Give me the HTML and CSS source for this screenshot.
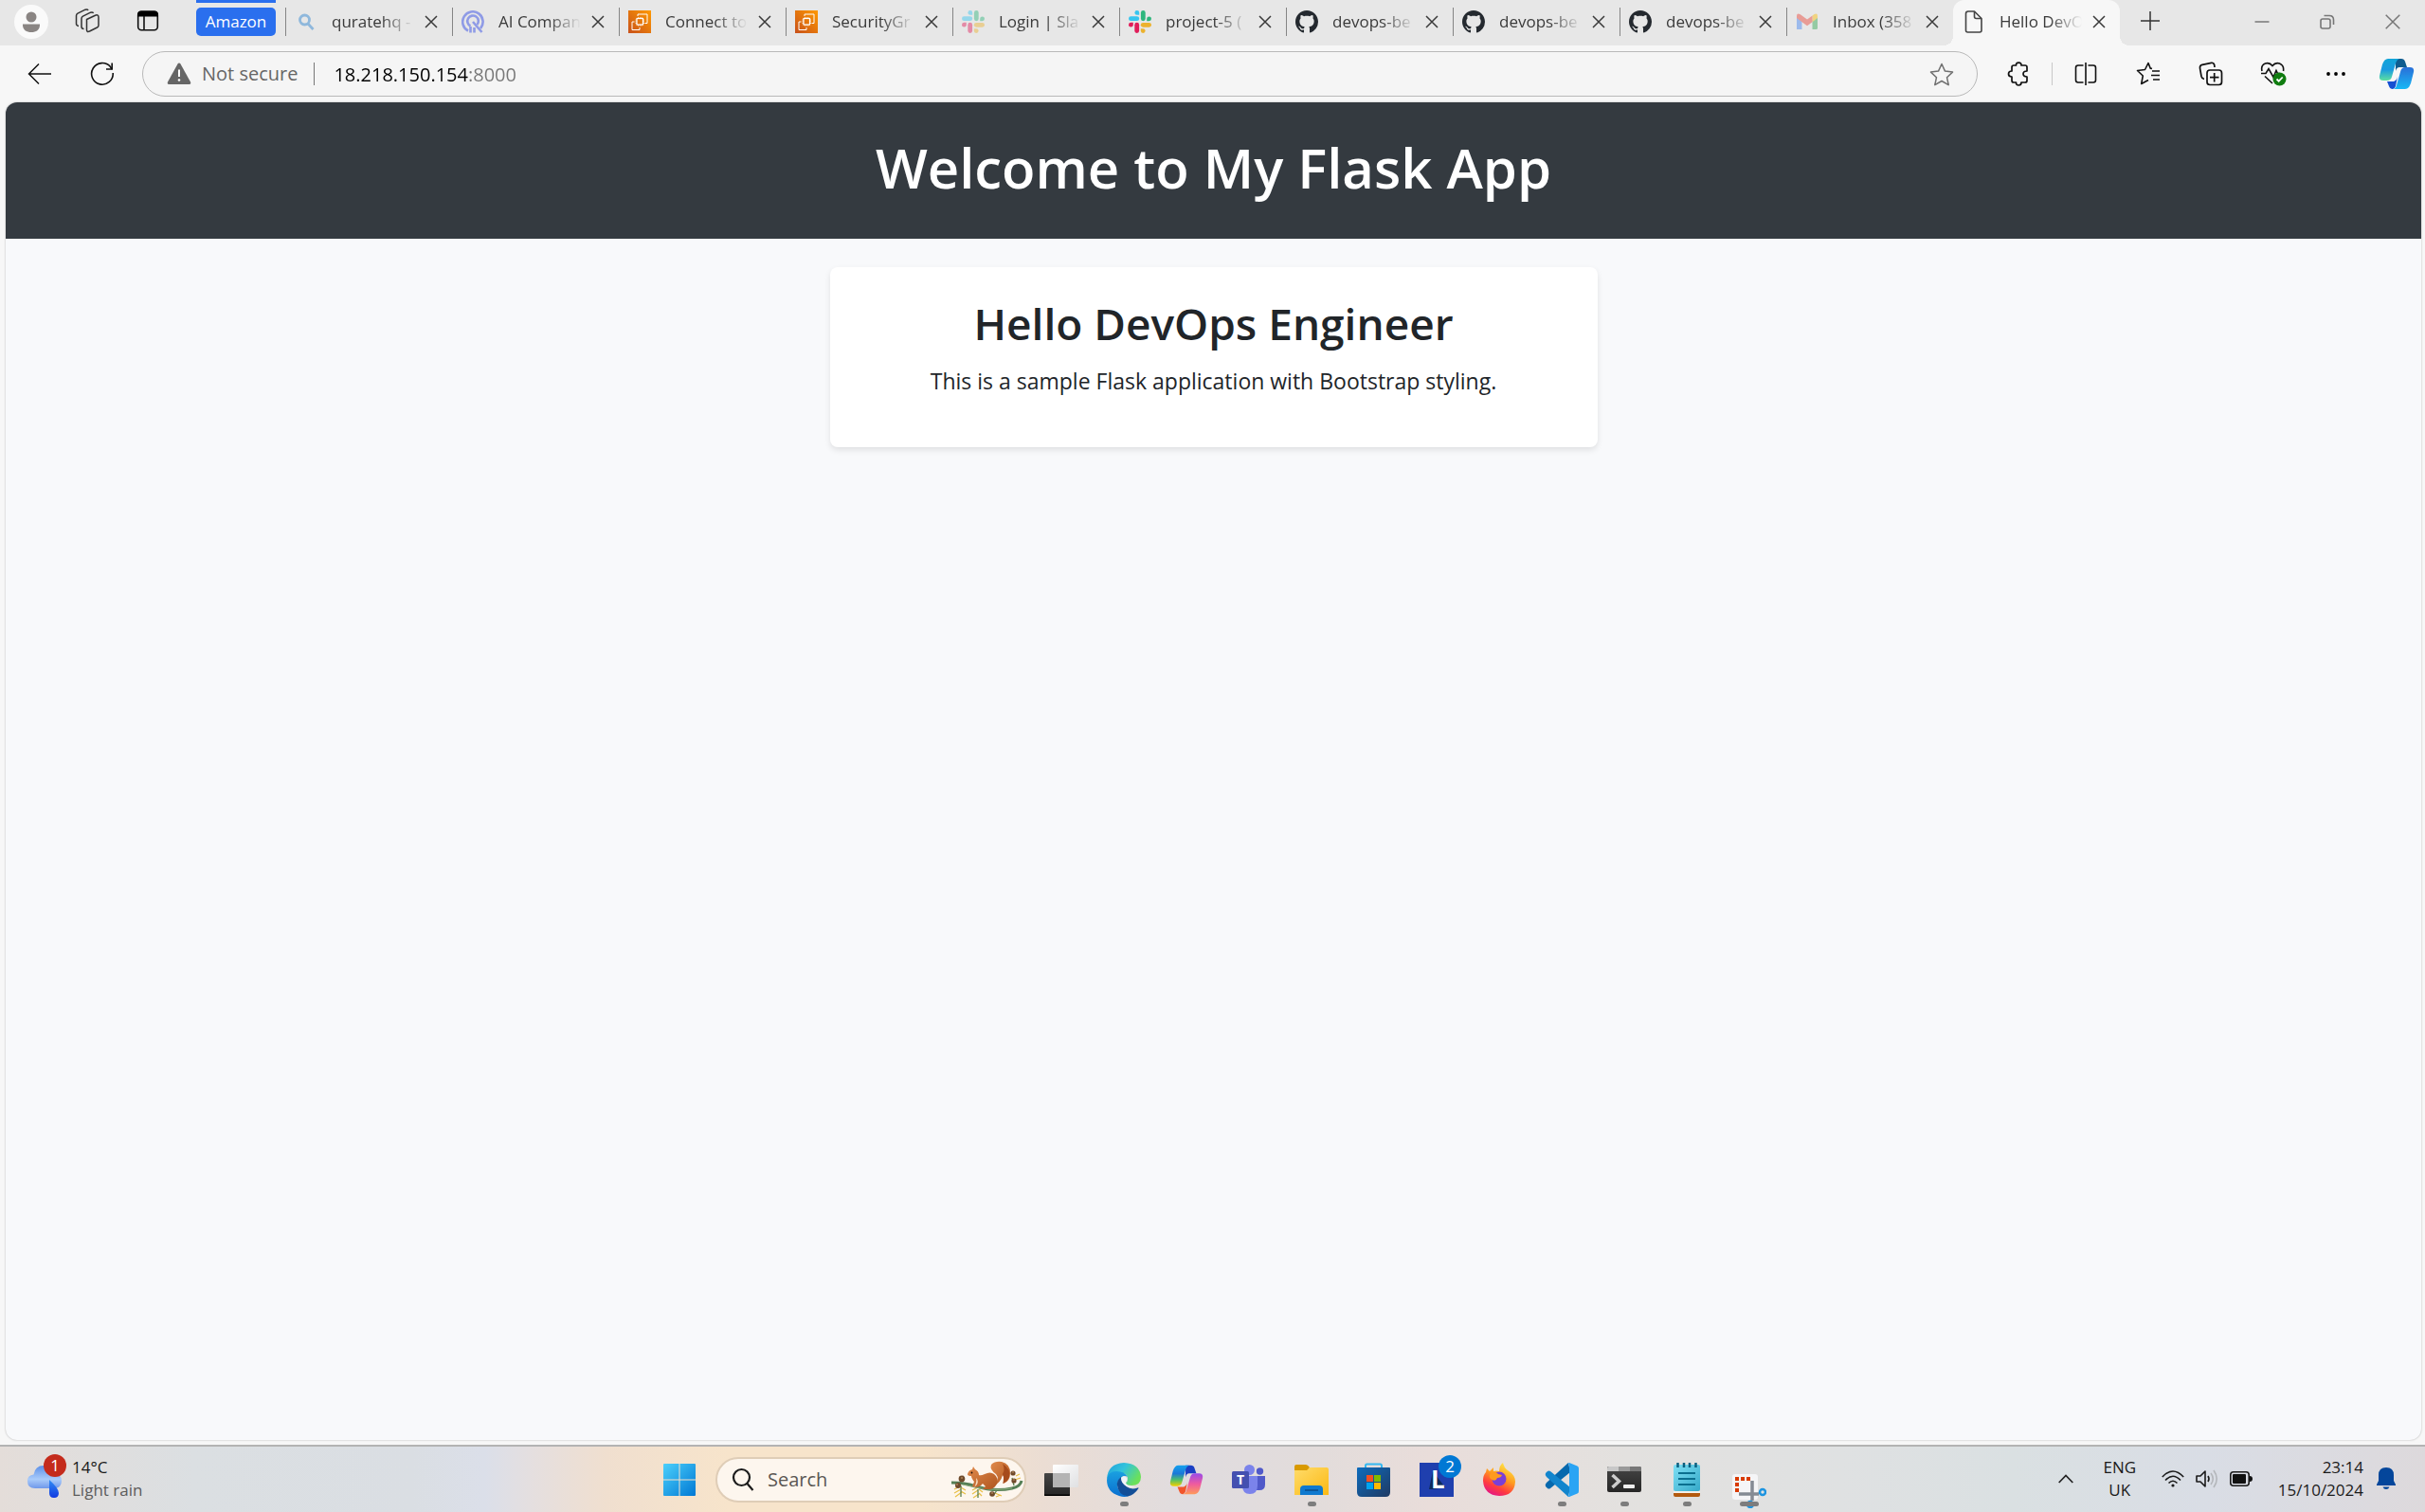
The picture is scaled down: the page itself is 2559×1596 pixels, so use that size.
FILE: index.html
```html
<!DOCTYPE html>
<html lang="en">
<head>
<meta charset="utf-8">
<title>Hello DevOps Engineer</title>
<link rel="stylesheet" href="styles.css">
</head>
<body>
<svg class="defs" aria-hidden="true">
  <defs>
    <linearGradient id="g-aws" x1="0" y1="1" x2="1" y2="0"><stop offset="0" stop-color="#c8511b"/><stop offset="1" stop-color="#ff9900"/></linearGradient>
    <linearGradient id="g-win" x1="0" y1="0" x2="1" y2="1"><stop offset="0" stop-color="#4cd0fb"/><stop offset="1" stop-color="#0078d4"/></linearGradient>
    <linearGradient id="g-cloud" x1="0" y1="0" x2="0" y2="1"><stop offset="0" stop-color="#5b8fe8"/><stop offset=".6" stop-color="#a9cbfa"/><stop offset="1" stop-color="#6f98ea"/></linearGradient>
    <linearGradient id="g-drop" x1="0" y1="0" x2="0" y2="1"><stop offset="0" stop-color="#2f8df5"/><stop offset="1" stop-color="#123ae0"/></linearGradient>
    <linearGradient id="g-dark" x1="0" y1="0" x2="0" y2="1"><stop offset="0" stop-color="#454545"/><stop offset="1" stop-color="#262626"/></linearGradient>
    <linearGradient id="g-edge1" x1="0" y1="0" x2="1" y2=".5"><stop offset="0" stop-color="#1fa0dc"/><stop offset=".5" stop-color="#33c3dc"/><stop offset="1" stop-color="#6be05a"/></linearGradient>
    <linearGradient id="g-edge2" x1="0" y1="0" x2="0" y2="1"><stop offset="0" stop-color="#1aa0e0"/><stop offset="1" stop-color="#0a6fd0"/></linearGradient>
    <linearGradient id="g-cp1" x1="0" y1="0" x2="0" y2="1"><stop offset="0" stop-color="#12a5d8"/><stop offset=".5" stop-color="#1a9be0"/><stop offset="1" stop-color="#5ee0a0"/></linearGradient>
    <linearGradient id="g-cp2" x1="0" y1="0" x2="0" y2="1"><stop offset="0" stop-color="#2a6fd8"/><stop offset="1" stop-color="#16b8f5"/></linearGradient>
    <linearGradient id="g-cp3" x1="0" y1="0" x2="0" y2="1"><stop offset="0" stop-color="#14a0ee"/><stop offset=".4" stop-color="#1a78d8"/><stop offset=".7" stop-color="#4fc06a"/><stop offset="1" stop-color="#f2d000"/></linearGradient>
    <linearGradient id="g-cp4" x1="0" y1="0" x2="0" y2="1"><stop offset="0" stop-color="#9a4be8"/><stop offset=".5" stop-color="#ee5aa0"/><stop offset="1" stop-color="#ff9a5a"/></linearGradient>
    <linearGradient id="g-folder" x1="0" y1="0" x2="1" y2="1"><stop offset="0" stop-color="#ffdc6b"/><stop offset="1" stop-color="#fcb913"/></linearGradient>
    <linearGradient id="g-store" x1="0" y1="0" x2="1" y2="1"><stop offset="0" stop-color="#0d6cbd"/><stop offset="1" stop-color="#203a63"/></linearGradient>
    <linearGradient id="g-fox" x1=".8" y1="0" x2=".3" y2="1"><stop offset="0" stop-color="#fff04a"/><stop offset=".45" stop-color="#ff9a1f"/><stop offset=".75" stop-color="#ff3b3f"/><stop offset="1" stop-color="#e31587"/></linearGradient>
    <linearGradient id="g-note" x1="0" y1="0" x2="1" y2="1"><stop offset="0" stop-color="#7fe0f5"/><stop offset="1" stop-color="#35a9c9"/></linearGradient>
    <linearGradient id="g-fur" x1="0" y1="0" x2="1" y2="1"><stop offset="0" stop-color="#e08a4c"/><stop offset="1" stop-color="#b0561f"/></linearGradient>
    <linearGradient id="g-white" x1="0" y1="0" x2="1" y2="1"><stop offset="0" stop-color="#ffffff"/><stop offset="1" stop-color="#dfe0e2"/></linearGradient>
  </defs>
  <symbol id="i-close" viewBox="0 0 14 14"><path d="M1 1l12 12M13 1L1 13" fill="none" stroke="currentColor" stroke-width="1.5"/></symbol>
  <symbol id="i-github" viewBox="0 0 16 16"><path fill="#24292f" d="M8 0C3.58 0 0 3.58 0 8c0 3.54 2.29 6.53 5.47 7.59.4.07.55-.17.55-.38 0-.19-.01-.82-.01-1.49-2.01.37-2.53-.49-2.69-.94-.09-.23-.48-.94-.82-1.13-.28-.15-.68-.52-.01-.53.63-.01 1.08.58 1.23.82.72 1.21 1.87.87 2.33.66.07-.52.28-.87.51-1.07-1.78-.2-3.64-.89-3.64-3.95 0-.87.31-1.59.82-2.15-.08-.2-.36-1.02.08-2.12 0 0 .67-.21 2.2.82.64-.18 1.32-.27 2-.27s1.36.09 2 .27c1.53-1.04 2.2-.82 2.2-.82.44 1.1.16 1.92.08 2.12.51.56.82 1.27.82 2.15 0 3.07-1.87 3.75-3.65 3.95.29.25.54.73.54 1.48 0 1.07-.01 1.93-.01 2.2 0 .21.15.46.55.38A8.01 8.01 0 0 0 16 8c0-4.42-3.58-8-8-8z"/></symbol>
  <symbol id="i-slack-part" viewBox="0 0 24 24"><rect y="6.3" width="11.2" height="4.8" rx="2.4"/><path d="M8.8 0a2.4 2.4 0 0 0 0 4.8h2.4V2.4A2.4 2.4 0 0 0 8.8 0z"/></symbol>
  <symbol id="i-slack" viewBox="0 0 24 24">
    <g fill="#36c5f0"><use href="#i-slack-part" width="24" height="24"/></g>
    <g fill="#2eb67d" transform="rotate(90 12 12)"><use href="#i-slack-part" width="24" height="24"/></g>
    <g fill="#ecb22e" transform="rotate(180 12 12)"><use href="#i-slack-part" width="24" height="24"/></g>
    <g fill="#e01e5a" transform="rotate(270 12 12)"><use href="#i-slack-part" width="24" height="24"/></g>
  </symbol>
  <symbol id="i-aws" viewBox="0 0 24 24"><path fill="url(#g-aws)" d="M0 0h24v24H0z"/><g fill="none" stroke="#fff"><path d="M10 6V4h10v9.500h-2.500M12 18v2.500H4V12h2.500"/><rect x="9" y="8.500" width="6.500" height="6.500" stroke-width="1.200"/><path d="M10.500 7v1.500M12.300 7v1.500M14 7v1.500M10.500 15v1.500M12.300 15v1.500M14 15v1.500M7.500 10H9M7.500 11.800H9M7.500 13.500H9M15.500 10H17M15.500 11.800H17M15.500 13.500H17" stroke-width=".7"/></g></symbol>
</svg>

<header class="tabstrip">
  <button class="profile" aria-label="Profile"><svg width="36" height="36" viewBox="0 0 36 36"><circle cx="18" cy="18" r="18" fill="#fafafa"/><circle cx="18" cy="13" r="5.500" fill="#8a8583"/><path d="M9 20.500h18v1c0 5-4 7.500-9 7.500s-9-2.500-9-7.500z" fill="#8a8583"/></svg></button>
  <button class="tool" aria-label="Workspaces"><svg width="26" height="26" viewBox="0 0 26 26" fill="none" stroke="#333" stroke-width="1.500" stroke-linejoin="round"><path d="M12.500 11.500l9-4.300q3.500-1.200 3.500 2v8.500q0 1.500-1.500 2.300l-8 4q-3 1.300-3-1.500z"/><path d="M9.500 21.500q-2.500 0-2.500-2.500v-8.500q0-1.500 1.500-2.300l8-4q2-.8 3.200.5"/><path d="M4 18.500q-2.500-.5-2.500-2.500V7.500q0-1.500 1.500-2.300l8-4q2-.8 3.200.5"/></svg></button>
  <button class="tool" aria-label="Tab actions"><svg width="24" height="24" viewBox="0 0 24 24"><rect x="1.700" y="2.200" width="20.600" height="19.600" rx="3.500" fill="none" stroke="#111" stroke-width="1.600"/><path d="M1 7.500V5.500a4 4 0 0 1 4-4h14a4 4 0 0 1 4 4v2z" fill="#000"/><path d="M8 7v15" stroke="#111" stroke-width="1.600"/></svg></button>
  <button class="group">Amazon</button>
  <nav class="tabs" aria-label="Tabs">
    <div class="tab"><svg class="favicon" viewBox="0 0 24 24" fill="none" stroke="#8fb8dc" stroke-width="2.800"><circle cx="10.500" cy="10" r="5"/><path d="M14 14l5.500 6"/></svg><span class="title">quratehq -</span><button class="close" aria-label="Close tab"><svg><use href="#i-close"/></svg></button></div>
    <div class="tab"><svg class="favicon" viewBox="0 0 24 24" fill="none" stroke="#8f9be6" stroke-width="2.600"><path d="M7 21.500A10.700 10.700 0 1 1 20 19"/><path d="M9.500 16.500A5.800 5.800 0 1 1 16.500 15"/><path d="M12 12l9.500 11M9.500 17v6.500M13.500 18v5.500"/></svg><span class="title">AI Compan</span><button class="close" aria-label="Close tab"><svg><use href="#i-close"/></svg></button></div>
    <div class="tab"><svg class="favicon"><use href="#i-aws"/></svg><span class="title">Connect to</span><button class="close" aria-label="Close tab"><svg><use href="#i-close"/></svg></button></div>
    <div class="tab"><svg class="favicon"><use href="#i-aws"/></svg><span class="title">SecurityGr</span><button class="close" aria-label="Close tab"><svg><use href="#i-close"/></svg></button></div>
    <div class="tab"><svg class="favicon asleep"><use href="#i-slack"/></svg><span class="title">Login | Sla</span><button class="close" aria-label="Close tab"><svg><use href="#i-close"/></svg></button></div>
    <div class="tab"><svg class="favicon"><use href="#i-slack"/></svg><span class="title">project-5 (</span><button class="close" aria-label="Close tab"><svg><use href="#i-close"/></svg></button></div>
    <div class="tab"><svg class="favicon"><use href="#i-github"/></svg><span class="title">devops-be</span><button class="close" aria-label="Close tab"><svg><use href="#i-close"/></svg></button></div>
    <div class="tab"><svg class="favicon"><use href="#i-github"/></svg><span class="title">devops-be</span><button class="close" aria-label="Close tab"><svg><use href="#i-close"/></svg></button></div>
    <div class="tab"><svg class="favicon"><use href="#i-github"/></svg><span class="title">devops-be</span><button class="close" aria-label="Close tab"><svg><use href="#i-close"/></svg></button></div>
    <div class="tab"><svg class="favicon asleep" viewBox="0 0 24 24"><path d="M1 20V6l5.500 4.200V20H2.500Q1 20 1 20z" fill="#4285f4"/><path d="M17.500 20v-9.800L23 6v12.500q0 1.500-1.500 1.500z" fill="#34a853"/><path d="M17.500 5.500l2-1.400Q23 2.500 23 6v2l-5.500 4.200z" fill="#fbbc04"/><path d="M6.500 12.200L1 8V6q0-3.500 3.500-1.900L12 9.500l5.500-4v6.700L12 16.300z" fill="#ea4335"/></svg><span class="title">Inbox (358</span><button class="close" aria-label="Close tab"><svg><use href="#i-close"/></svg></button></div>
    <div class="tab active"><svg class="favicon" viewBox="0 0 24 24" fill="none" stroke="#444" stroke-width="1.600" stroke-linejoin="round"><path d="M3.500 3.500q0-2.500 2.500-2.500h6.500L20 8.500V21q0 2-2 2H5.500q-2 0-2-2z"/><path d="M12.500 1v5.500q0 2 2 2H20"/></svg><span class="title">Hello DevO</span><button class="close" aria-label="Close tab"><svg><use href="#i-close"/></svg></button></div>
  </nav>
  <button class="tool" aria-label="New tab"><svg width="22" height="22" viewBox="0 0 22 22" stroke="#333" stroke-width="1.500"><path d="M1 11h20M11 1v20"/></svg></button>
  <div class="window-controls">
    <button aria-label="Minimise"><svg width="16" height="16" viewBox="0 0 16 16" stroke="#777" stroke-width="1.500"><path d="M.5 8h15"/></svg></button>
    <button aria-label="Restore"><svg width="16" height="16" viewBox="0 0 16 16" fill="none" stroke="#777" stroke-width="1.600"><rect x="1" y="5" width="10" height="10" rx="2"/><path d="M4.500 1.500H10q4.500 0 4.500 4.500v5" /></svg></button>
    <button aria-label="Close window"><svg width="16" height="16" viewBox="0 0 16 16" stroke="#777" stroke-width="1.500"><path d="M.7.7l14.600 14.600M15.300.7L.7 15.300"/></svg></button>
  </div>
</header>

<div class="toolbar">
  <button class="tool" aria-label="Back"><svg width="26" height="24" viewBox="0 0 26 24" fill="none" stroke="#111" stroke-width="1.500"><path d="M12 1.500L1.500 12 12 22.500M1.500 12H25"/></svg></button>
  <button class="tool" aria-label="Refresh"><svg width="26" height="26" viewBox="0 0 26 26" fill="none" stroke="#111" stroke-width="1.600"><path d="M24.200 12A11.300 11.300 0 1 1 21.500 5.500L23 8"/><path d="M23.200 1.500V8H17"/></svg></button>
  <div class="address">
    <svg width="26" height="24" viewBox="0 0 26 24"><path d="M11.500 1.500q1.500-2 3 0l10.500 19q1 2.500-1.500 2.500h-21q-2.500 0-1.500-2.500z" fill="#666"/><path d="M13 7.500v7.500" stroke="#fff" stroke-width="2"/><circle cx="13" cy="18.500" r="1.300" fill="#fff"/></svg>
    <span class="security">Not secure</span>
    <input class="url" type="text" aria-label="Address" value="18.218.150.154:8000">
    <button class="fav" aria-label="Add to favourites"><svg width="26" height="25" viewBox="0 0 26 25" fill="none" stroke="#707070" stroke-width="1.500" stroke-linejoin="round"><path d="M13 1.500l3.500 7.600 8 1-6 5.600 1.700 8L13 19.500l-7.200 4.200 1.700-8-6-5.600 8-1z"/></svg></button>
  </div>
  <button class="tool extensions" aria-label="Extensions"><svg width="24" height="26" viewBox="0 0 24 26" fill="none" stroke="#111" stroke-width="1.700" stroke-linejoin="round"><path d="M7 4h2.500q-.3-2.800 2.700-2.800T15 4h4q2 0 2 2v4q-4 .2-4 3t4 3v4q0 2-2 2h-4q0 3-2.800 3T9.500 22H7q-2 0-2-2v-4q-3.500 0-3.500-3T5 10V6q0-2 2-2z"/></svg></button>
  <span class="divider"></span>
  <button class="tool" aria-label="Split screen"><svg width="24" height="24" viewBox="0 0 24 24" fill="none" stroke="#111" stroke-width="1.600"><path d="M9.500 3H4Q1.500 3 1.500 5.500v13Q1.500 21 4 21h5.500M14.500 3H20q2.500 0 2.500 2.500v13Q22.500 21 20 21h-5.500M12 0v24"/></svg></button>
  <button class="tool" aria-label="Favourites"><svg width="26" height="26" viewBox="0 0 26 26" fill="none" stroke="#111" stroke-width="1.600" stroke-linejoin="round"><path d="M17 7.500l-1.800-.4L13 1.500l-3.500 7-8 1 5.800 5.500-1.600 8.500L13 19.500M17 10h8M16 14.500h9M18 19h7"/></svg></button>
  <button class="tool" aria-label="Collections"><svg width="26" height="26" viewBox="0 0 26 26" fill="none" stroke="#111" stroke-width="1.700"><rect x="9" y="9" width="15.500" height="15.500" rx="3"/><path d="M16.700 12v9.500M12 16.700h9.500M6 18.500Q3.500 18 3 15.500L1.500 6.800Q1.200 4 4 3.300l9.500-2Q16 1 16.700 3.500L17 6"/></svg></button>
  <button class="tool" aria-label="Browser essentials"><svg width="28" height="26" viewBox="0 0 28 26" fill="none" stroke="#111" stroke-width="1.600"><path d="M2 10Q.5 4 5.500 2q4.500-1.500 7.500 2.500Q16 .5 20.500 2q5 2 4 8M1 12.500h5l3-5 5 9 3-7 1.500 3h2M5 15.500l8 7.500"/><circle cx="20.500" cy="18.500" r="7" fill="#107c10" stroke="none"/><path d="M17.500 18.500l2.200 2.200 4-4.200" stroke="#fff" stroke-width="1.800"/></svg></button>
  <button class="tool" aria-label="Settings and more"><svg width="20" height="6" viewBox="0 0 20 6"><circle cx="2" cy="3" r="1.900"/><circle cx="10" cy="3" r="1.900"/><circle cx="18" cy="3" r="1.900"/></svg></button>
  <button class="copilot" aria-label="Copilot"><svg width="38" height="34" viewBox="0 0 38 34"><path d="M18 1h6q3 0 4 3l2 6h-8q-3 0-4 4z" fill="#0f5c8f"/><path d="M10 1h12q-3 1-4 5l-4 14q-1 4-5 4H5q-5 0-4-5l3-12Q6 1 10 1z" fill="url(#g-cp1)"/><path d="M9 25h7q3-1 4-5l-2 10q-1 3-3 3-3 0-4-3z" fill="#1450d2"/><path d="M28 10h5q5 0 4 5l-3 12q-2 6-6 6H15q3 0 4-4l4-14q1-5 5-5z" fill="url(#g-cp2)"/></svg></button>
</div>

<main class="page">
  <div class="banner"><h1>Welcome to My Flask App</h1></div>
  <section class="card">
    <h2>Hello DevOps Engineer</h2>
    <p>This is a sample Flask application with Bootstrap styling.</p>
  </section>
</main>

<footer class="taskbar">
  <button class="weather">
    <span class="weather-icon"><svg width="36" height="40" viewBox="0 0 36 40"><path d="M8 30Q0 30 0 22.500 0 16 6.500 15.500 8 6 17 6q8 0 10.500 8Q36 15 36 22t-7 8z" fill="url(#g-cloud)"/><path d="M23 21q10 9 10 14 0 5-5 5t-5-5z" fill="url(#g-drop)"/></svg><span class="badge red">1</span></span>
    <span class="weather-text"><span>14°C</span><span class="muted">Light rain</span></span>
  </button>

  <div class="apps">
    <button class="app" aria-label="Start"><svg width="36" height="36" viewBox="0 0 36 36" fill="url(#g-win)"><path d="M1 2q0-1 1-1h15.500v16.500H1zM18.500 1H34q1 0 1 1v15.500H18.500zM1 18.500h16.500V35H2q-1 0-1-1zM18.500 18.500H35V34q0 1-1 1H18.500z"/></svg></button>
    <label class="search">
      <svg width="24" height="26" viewBox="0 0 24 26" fill="none" stroke="#1c1c1c" stroke-width="2.200"><circle cx="10.500" cy="10.500" r="8.500"/><path d="M16.500 17l6 7"/></svg>
      <input type="search" placeholder="Search" aria-label="Search">
      <svg width="76" height="40" viewBox="0 0 76 40">
        <g fill="none" stroke="#e8c04a" stroke-width="1.300"><path d="M3 30l6-3M3 34l7-4M4 38l7-5M10 28l5 3M10 32l5 3M22 31l6-3M22 35l6-4M23 39l6-4M29 30l4 3M29 34l3 3M46 34l7 3M47 38l5-2M67 20l6-2M68 16l4-2"/></g>
        <path d="M10 26v12M28 30v9M48 31l-4 6M66 26l-2-8" fill="none" stroke="#5d8050" stroke-width="1.300"/>
        <path d="M0 23q16 0 26 4 20 6 38 2 9-2 10-8" fill="none" stroke="#557f55" stroke-width="3"/>
        <path d="M12 25q30 8 52 4" fill="none" stroke="#86a878" stroke-width="1.200"/>
        <path d="M46 24q5-5 1-10-7-5-5-10Q46 0 53 1q9 2 9 12 0 8-7 11 2-6-1-9-2 8-10 12z" fill="url(#g-fur)"/>
        <path d="M54 3q9 6 7 14-2 5-7 7 2-5 0-10 3-5 0-11z" fill="#a64a1b"/>
        <path d="M17 14q1-4 5-5l1-3 2 3q4 2 4 6 2 1 6-1 6-3 10 0 5 4 3 10-2 5-7 6h-8l3-3-3-3q-3 4-8 4l-3-1 2-5q-3-4-3-6-4 0-4-2z" fill="url(#g-fur)"/>
        <path d="M26 18q3 3 1 7l-3 3q3-5 2-10z" fill="#f5dcc0"/>
        <circle cx="21.500" cy="12.500" r=".9" fill="#201008"/>
        <g fill="#6f4a2b"><circle cx="11" cy="19" r="3.400"/><circle cx="7" cy="26" r="3"/><circle cx="43" cy="35" r="2.800"/><circle cx="65" cy="13" r="2.600"/><circle cx="66" cy="21" r="2.600"/></g>
        <g fill="#a98056"><circle cx="11" cy="18" r="1.100"/><circle cx="6" cy="25" r="1"/><circle cx="43" cy="34" r="1"/><circle cx="65" cy="12" r=".9"/><circle cx="66" cy="20" r=".9"/></g>
      </svg>
    </label>
    <button class="app" aria-label="Task view"><svg width="36" height="36" viewBox="0 0 36 36"><rect x="0" y="11" width="27" height="24" rx="1" fill="url(#g-dark)"/><path d="M0 33.500h27V34q0 1-1 1H1q-1 0-1-1z" fill="#000"/><rect x="9" y="2" width="27" height="24" rx="1" fill="url(#g-white)"/><path d="M9 11h18v15H9z" fill="#b4b4b4"/></svg></button>
    <button class="app running" aria-label="Microsoft Edge"><svg width="36" height="36" viewBox="0 0 36 36"><path d="M0 17Q1 1 18 0q17 1 18 15 0 9-10 9-6 0-6-3 2-1 2-4 0-5-5-6-8 0-17 6z" fill="url(#g-edge1)"/><path d="M0 18Q1 9 10 9q9 0 12 6-3-2-6 0-5 3-5 9 1 9 12 11-4 2-10 0Q0 31 0 18z" fill="url(#g-edge2)"/><path d="M15 15q-5 4-4 9 1 10 11 11.500 7-1.500 11.500-8.500 0-1-1-.5-7 2.500-12-1.500-5-4-5.500-10z" fill="#134e97"/><path d="M15 16q2-3 5-1 2 2 1 4-2 2 0 4 3 2 9 2-5 2-9 0-6-3-6-9z" fill="#f0f4f8"/></svg></button>
    <button class="app" aria-label="Copilot"><svg width="36" height="34" viewBox="0 0 38 34"><path d="M18 1h6q3 0 4 3l2 6h-8q-3 0-4 4z" fill="#1a3fc4"/><path d="M10 1h12q-3 1-4 5l-4 14q-1 4-5 4H5q-5 0-4-5l3-12Q6 1 10 1z" fill="url(#g-cp3)"/><path d="M9 25h7q3-1 4-5l-2 10q-1 3-3 3-3 0-4-3z" fill="#f2552c"/><path d="M28 10h5q5 0 4 5l-3 12q-2 6-6 6H15q3 0 4-4l4-14q1-5 5-5z" fill="url(#g-cp4)"/></svg></button>
    <button class="app" aria-label="Microsoft Teams"><svg width="36" height="36" viewBox="0 0 36 36"><circle cx="29.500" cy="9" r="3.700" fill="#5059c9"/><path d="M24 14h11v9q0 6-6 6h-5z" fill="#5059c9"/><circle cx="18.500" cy="7.500" r="5.500" fill="#7b83eb"/><path d="M11 14h16v10q0 9-8 9t-8-9z" fill="#7b83eb"/><rect x="0" y="9" width="18" height="18" rx="1.500" fill="#4450b0"/><text x="9" y="23" text-anchor="middle" class="teams-letter">T</text></svg></button>
    <button class="app running" aria-label="File Explorer"><svg width="36" height="36" viewBox="0 0 36 36"><path d="M0 4q0-2 2-2h10q2 0 4 3l-2 4H0z" fill="#d99a00"/><path d="M0 8h13l3-3h18q2 0 2 2v27H0z" fill="url(#g-folder)"/><path d="M6 34v-6q0-4 4-4h16q4 0 4 4v6z" fill="#0f79cf"/><path d="M11 29h14" stroke="#0b4d8a" stroke-width="1.500"/></svg></button>
    <button class="app" aria-label="Microsoft Store"><svg width="36" height="36" viewBox="0 0 36 36"><path d="M9 7V3q0-1.500 1.500-1.500h14Q26 1.500 26 3v4" fill="none" stroke="#35b8f0" stroke-width="2"/><path d="M0 6q0-1 1-1h33q1 0 1 1v25q0 5-5 5H5q-5 0-5-5z" fill="url(#g-store)"/><path d="M10 13h7v7h-7z" fill="#f25022"/><path d="M18 13h7v7h-7z" fill="#7fba00"/><path d="M10 21h7v7h-7z" fill="#00a4ef"/><path d="M18 21h7v7h-7z" fill="#ffb900"/></svg></button>
    <button class="app" aria-label="L, 2 notifications"><svg width="36" height="36" viewBox="0 0 36 36"><path d="M0 0h36v36H0z" fill="#1f3fae"/><path d="M14 9l-4 19 4 0 13-2z" fill="#0c2b5c"/><text x="12" y="27" class="l-letter">L</text></svg><span class="badge blue">2</span></button>
    <button class="app" aria-label="Firefox"><svg width="36" height="36" viewBox="0 0 36 36"><path d="M1 19q0-6 3-9l1-4 3 3 4-4v4q3-1 6 0Q18 3 22 0q1 5 5 8 8 5 8 12-1 15-17 15Q2 34 1 19z" fill="url(#g-fox)"/><circle cx="18" cy="17" r="7.500" fill="#7a3fd6"/><path d="M10 10q5-1 7 2l4 1q-1 3-5 3-2 5-7 1-3-3 1-7z" fill="#ff9a1f"/></svg></button>
    <button class="app running" aria-label="Visual Studio Code"><svg width="36" height="36" viewBox="0 0 36 36"><path d="M25 0L2 21q-2 2-1 4l2 2q1.500 1 3 0L27 10z" fill="#0668ad"/><path d="M25 36L2 15q-2-2-1-4l2-2q1.500-1 3 0l21 17z" fill="#1285cd"/><path d="M26 0l8.500 3.500Q36 4 36 6v24q0 2-1.500 2.500L26 36q-1 0-1.500-1 1.500 0 1.500-2V3q0-2-1.500-2z" fill="#2aa4f4"/></svg></button>
    <button class="app running" aria-label="Terminal"><svg width="36" height="36" viewBox="0 0 36 36"><rect y="4" width="36" height="27" rx="2" fill="url(#g-dark)"/><path d="M0 9V6q0-2 2-2h32q2 0 2 2v3z" fill="#777"/><path d="M0 9V6q0-2 2-2h10v5z" fill="#c8c8c8"/><path d="M12 4h12v5H12z" fill="#999"/><path d="M5.500 13l7 6.500-7 6.500" fill="none" stroke="#ccc" stroke-width="3.500"/><rect x="17" y="23" width="12" height="4" rx="1" fill="#eee"/></svg></button>
    <button class="app running" aria-label="Notepad"><svg width="36" height="36" viewBox="0 0 36 36"><path d="M4 30h28v4q0 2-2 2H6q-2 0-2-2z" fill="#b35a10"/><path d="M4 30h28v2H4z" fill="#f4f0ea"/><rect x="4" y="2" width="28" height="28" rx="2" fill="url(#g-note)"/><path d="M9 11h18M9 17h18M9 23h18" stroke="#0b6f8f" stroke-width="2"/><path d="M8.500 0v5M15 0v5M21 0v5M27.500 0v5" stroke="#0b5f80" stroke-width="2.500"/></svg></button>
    <button class="app running wide" aria-label="Snipping Tool"><svg width="36" height="36" viewBox="0 0 36 36"><rect x="0" y="0" width="27" height="27" rx="3" fill="#f5f5f7"/><path d="M5 19V5h15" fill="none" stroke="#d83b01" stroke-width="4" stroke-dasharray="4 2"/><path d="M21 7v21M7 21h21" stroke="#858b94" stroke-width="3.500"/><g fill="none" stroke="#1d94e0" stroke-width="2.500"><circle cx="32" cy="19" r="3"/><circle cx="19" cy="32" r="3"/></g></svg></button>
  </div>

  <div class="tray">
    <button class="chevron" aria-label="Show hidden icons"><svg width="16" height="10" viewBox="0 0 16 10" fill="none" stroke="#222" stroke-width="1.700"><path d="M.7 9L8 1.500 15.300 9"/></svg></button>
    <button class="lang"><span>ENG</span><span>UK</span></button>
    <button class="status" aria-label="Network, volume and battery">
      <svg width="24" height="20" viewBox="0 0 24 20" fill="none" stroke="#1a1a1a" stroke-width="1.600"><path d="M.8 8Q12-4 23.200 8M4 11.500q8-8.500 16 0M7.500 14.500q4.500-4.500 9 0"/><circle cx="12" cy="17" r="1.600" fill="#1a1a1a" stroke="none"/></svg>
      <svg width="24" height="20" viewBox="0 0 24 20" fill="none" stroke="#1a1a1a" stroke-width="1.600" stroke-linejoin="round"><path d="M1 7h4l5-5v16l-5-5H1zM13 7q2 3 0 6"/><path d="M16 4q4.500 6 0 12M19 1q6.500 9 0 18" stroke="#b4b7bb"/></svg>
      <svg width="24" height="16" viewBox="0 0 24 16"><rect x=".8" y=".8" width="19.400" height="14.400" rx="3" fill="none" stroke="#1a1a1a" stroke-width="1.600"/><rect x="3" y="3" width="14" height="10" rx="1" fill="#111"/><path d="M21 5q3 0 3 3t-3 3z" fill="#111"/></svg>
    </button>
    <button class="clock"><span>23:14</span><span>15/10/2024</span></button>
    <button class="bell" aria-label="Notifications"><svg width="20" height="24" viewBox="0 0 20 24" fill="#04469b"><path d="M10 0q8 0 8 8v6l2 4v1H0v-1l2-4V8q0-8 8-8zM6.500 20.500h7q-1 2.500-3.500 2.500t-3.500-2.500z"/></svg></button>
  </div>
</footer>
</body>
</html>
```
FILE: styles.css
```css
* {
  box-sizing: border-box;
}

body {
  margin: 0;
  min-height: 100vh;
  display: flex;
  flex-direction: column;
  background: #f7f7f7;
  color: #1a1a1a;
  font: 17px/24px "Open Sans", "Noto Sans", sans-serif;
}

button,
input {
  margin: 0;
  padding: 0;
  border: 0;
  outline: 0;
  background: none;
  color: inherit;
  font: inherit;
}

button {
  display: flex;
  flex: none;
  align-items: center;
  justify-content: center;
}

svg {
  display: block;
  flex: none;
}

.defs {
  position: absolute;
  width: 0;
  height: 0;
}

.tool {
  width: 66px;
}

/* Tab strip */
.tabstrip {
  display: flex;
  height: 48px;
  padding-left: 15px;
  background: #e7e7e7;
}

.profile {
  width: 36px;
  height: 46px;
  margin-right: 9px;
}

.tabstrip .tool {
  width: 64px;
  height: 44px;
}

.group {
  position: relative;
  width: 84px;
  height: 30px;
  margin: 8px 10px 0 19px;
  border-radius: 5px;
  background: #2a6fee;
  color: #fff;
}

.group::before {
  content: "";
  position: absolute;
  top: -8px;
  left: 0;
  width: 100%;
  height: 3px;
  background: #2a6fee;
}

.tabs {
  display: flex;
  flex: 0 1 1936px;
  min-width: 0;
}

.tab {
  position: relative;
  display: flex;
  flex: 1 1 176px;
  align-items: center;
  min-width: 0;
  padding: 0 4px 2px 0;
  color: #3a3a3a;
}

.tab::before {
  content: "";
  width: 1px;
  height: 30px;
  margin-right: 9px;
  background: #858585;
}

.favicon {
  width: 24px;
  height: 24px;
  margin-right: 15px;
}

.asleep {
  opacity: 0.45;
}

.title {
  flex: 1;
  min-width: 0;
  overflow: hidden;
  white-space: nowrap;
  -webkit-mask-image: linear-gradient(90deg, #000 60%, transparent);
  mask-image: linear-gradient(90deg, #000 60%, transparent);
}

.close {
  width: 36px;
  height: 36px;
}

.close svg {
  width: 14px;
  height: 14px;
}

.tab.active {
  padding-left: 10px;
  border-radius: 12px 12px 0 0;
  background: #f7f7f7;
}

.tab.active::before,
.tab.active::after {
  position: absolute;
  bottom: 0;
  width: 10px;
  height: 10px;
  margin: 0;
}

.tab.active::before {
  left: -10px;
  background: radial-gradient(circle at 0 0, transparent 10px, #f7f7f7 10px);
}

.tab.active::after {
  content: "";
  right: -10px;
  background: radial-gradient(circle at 100% 0, transparent 10px, #f7f7f7 10px);
}

.window-controls {
  display: flex;
  height: 45px;
  margin-left: auto;
}

.window-controls button {
  width: 69px;
}

/* Toolbar */
.toolbar {
  display: flex;
  align-items: center;
  height: 60px;
  padding-left: 9px;
}

.address {
  display: flex;
  flex: 1;
  align-items: center;
  height: 48px;
  margin-left: 9px;
  padding: 0 24px 0 25px;
  border: 1px solid #b9b9b9;
  border-radius: 24px;
  background: #f5f5f5;
  font-size: 20px;
}

.security {
  margin-left: 11px;
  padding-right: 17px;
  color: #666;
  white-space: nowrap;
  border-right: 1px solid #777;
}

.url {
  flex: 1;
  min-width: 0;
  height: 36px;
  margin-left: 20px;
  background: linear-gradient(90deg, #000 142px, #777 142px);
  -webkit-background-clip: text;
  background-clip: text;
  -webkit-text-fill-color: transparent;
}

.extensions {
  margin-left: 10px;
}

.divider {
  width: 1px;
  height: 24px;
  margin: 0 2px;
  background: #c8c8c8;
}

.copilot {
  width: 61px;
}

/* Web page */
.page {
  flex: 1;
  margin: 0 4px 5px 6px;
  overflow: hidden;
  border-radius: 12px;
  background: #f8f9fb;
  box-shadow: 0 0 2px #aaa;
  color: #212529;
  text-align: center;
}

.banner {
  padding: 33px 30px 39px;
  background: #343a40;
  color: #fff;
}

h1,
h2,
p {
  margin: 0;
}

h1 {
  font-size: 58px;
  font-weight: 600;
  line-height: 72px;
}

.card {
  max-width: 810px;
  margin: 30px auto;
  padding: 30px 30px 52px;
  border-radius: 8px;
  background: #fff;
  box-shadow: 0 3px 6px rgba(0, 0, 0, 0.1);
}

h2 {
  margin-bottom: 14px;
  font-size: 46px;
  font-weight: 600;
  line-height: 58px;
}

.card p {
  font-size: 23px;
  line-height: 36px;
}

/* Taskbar */
.taskbar {
  display: grid;
  grid-template-columns: 1fr auto 1fr;
  height: 71px;
  border-top: 2px solid #b3b3b3;
  background: linear-gradient(90deg, #e4ddd9 0%, #dbdfe2 8%, #dadee3 17%, #dbdfe9 20%, #e5dfdf 22%, #f0dfcf 25%, #f7e4cb 30%, #f7e4cb 38%, #ebddd3 43%, #e0dcdf 49%, #e2dcdb 54%, #e9ddda 59%, #e3e1df 67%, #dfe1e2 76%, #dae0e2 83%, #d9dde5 91%, #ddd9dc 100%);
}

.weather {
  justify-self: start;
  padding: 0 0 2px 29px;
  text-align: left;
}

.weather-icon {
  position: relative;
  margin-right: 11px;
}

.weather-text,
.lang,
.clock {
  display: flex;
  flex-direction: column;
}

.muted {
  color: #5c5c5c;
}

.badge {
  position: absolute;
  width: 24px;
  height: 24px;
  border-radius: 50%;
  color: #fff;
  text-align: center;
}

.badge.red {
  top: -6px;
  left: 17px;
  background: #c42b1c;
}

.badge.blue {
  top: 9px;
  right: 7px;
  background: #0078d4;
}

.apps {
  display: flex;
  align-items: center;
  padding-left: 4px;
}

.app {
  position: relative;
  width: 66px;
  height: 69px;
}

.running::after {
  content: "";
  position: absolute;
  bottom: 6px;
  left: 29px;
  width: 9px;
  height: 5px;
  border-radius: 3px;
  background: #7d7d7d;
}

.wide::after {
  left: 23px;
  width: 20px;
}

.wide svg {
  margin-top: 24px;
}

.teams-letter {
  fill: #fff;
  font-size: 14px;
  font-weight: 700;
}

.l-letter {
  fill: #fff;
  font-size: 26px;
  font-weight: 700;
}

.search {
  display: flex;
  align-items: center;
  width: 328px;
  height: 48px;
  margin: 0 4px 0 5px;
  padding: 0 1px 0 15px;
  border: 2px solid #dfcdb7;
  border-radius: 24px;
  background: #fdf6ee;
  font-size: 20px;
}

.search input {
  flex: 1;
  min-width: 0;
  margin-left: 14px;
}

.search input::placeholder {
  color: #5a5753;
  opacity: 1;
}

.tray {
  display: flex;
  justify-content: flex-end;
  padding: 0 31px 2px 0;
}

.chevron {
  width: 48px;
  margin-right: 8px;
}

.lang {
  width: 50px;
}

.status {
  gap: 12px;
  margin-left: 19px;
}

.clock {
  align-items: flex-end;
  margin-left: 27px;
}

.bell {
  margin-left: 14px;
}
```
